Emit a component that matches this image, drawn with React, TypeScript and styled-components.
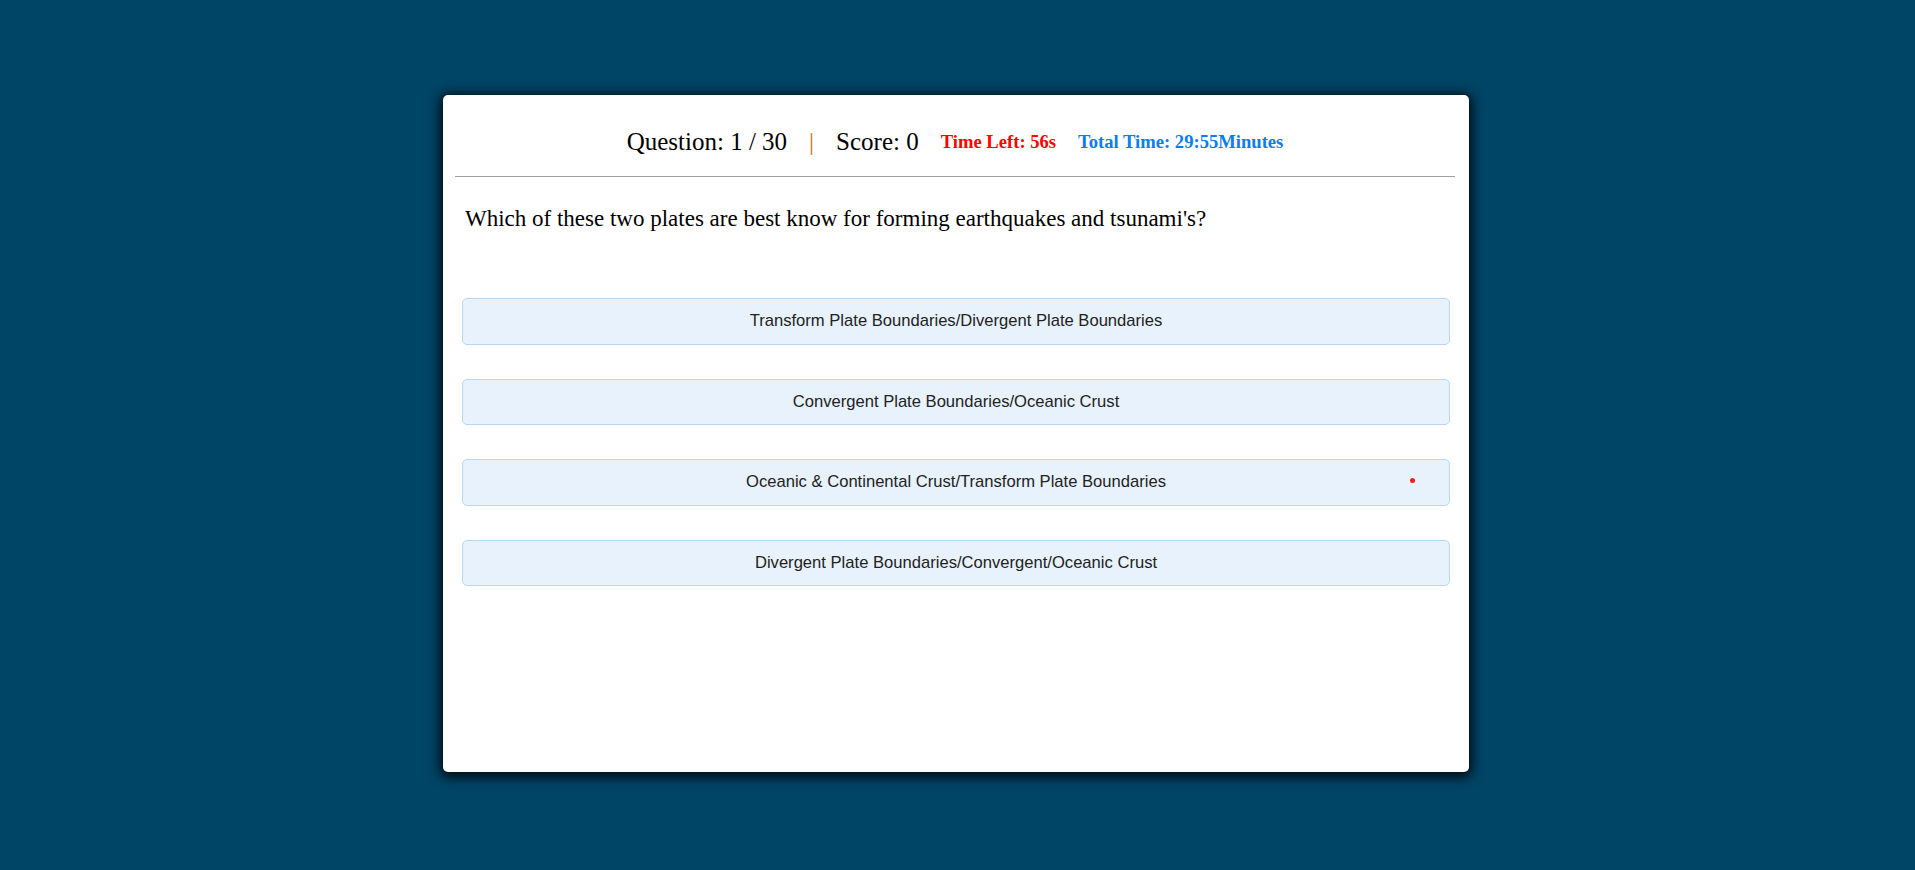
import React from "react";
import styled, { createGlobalStyle } from "styled-components";

const GlobalStyle = createGlobalStyle`
  html, body {
    margin: 0;
    padding: 0;
    background: #004466;
  }
  body {
    font-family: "Liberation Serif", "Times New Roman", serif;
  }
`;

const Page = styled.div`
  min-height: 870px;
  box-sizing: border-box;
  padding: 95px 3px 0 0;
  display: flex;
  justify-content: center;
  align-items: flex-start;
`;

const Card = styled.div`
  width: 1026px;
  height: 677px;
  box-sizing: border-box;
  background: #ffffff;
  border-radius: 5px;
  box-shadow: 0 2px 12px 3px rgba(0, 0, 0, 0.85);
  padding: 0 12px 12px 12px;
  display: flex;
  flex-direction: column;
`;

const Header = styled.div`
  display: flex;
  justify-content: center;
  align-items: center;
  padding: 33px 0 20px 0;
  border-bottom: 1px solid #a0a0a0;
  margin: 0 2px 0 0;
`;

const Stat = styled.span`
  font-size: 25px;
  color: #000;
`;

const Pipe = styled.span`
  font-size: 25px;
  color: #c8741c;
  margin: 0 22px;
`;

const Timer = styled.span<{ $color: string; $gap: number }>`
  font-size: 18.6px;
  font-weight: bold;
  color: ${(p) => p.$color};
  margin-left: ${(p) => p.$gap}px;
`;

const Question = styled.p`
  margin: 29px 0 0 0;
  padding-left: 10px;
  font-size: 23px;
  color: #000;
`;

const Answers = styled.div`
  display: flex;
  flex-direction: column;
  gap: 34px;
  margin: 66px 7px 0 7px;
`;

const Answer = styled.button`
  position: relative;
  height: 46.5px;
  box-sizing: border-box;
  width: 100%;
  background: #e8f2fc;
  border: 1px solid #b8d8f2;
  border-radius: 5px;
  font-family: "Liberation Sans", Arial, sans-serif;
  font-size: 16.6px;
  color: #222;
  text-align: center;
  cursor: pointer;
  padding: 0;
`;

const Dot = styled.span`
  position: absolute;
  right: 34px;
  top: 18px;
  width: 5px;
  height: 5px;
  border-radius: 50%;
  background: #ff1a1a;
`;

const answers = [
  { text: "Transform Plate Boundaries/Divergent Plate Boundaries", dot: false },
  { text: "Convergent Plate Boundaries/Oceanic Crust", dot: false },
  { text: "Oceanic & Continental Crust/Transform Plate Boundaries", dot: true },
  { text: "Divergent Plate Boundaries/Convergent/Oceanic Crust", dot: false },
];

export default function App() {
  return (
    <>
      <GlobalStyle />
      <Page>
        <Card>
          <Header>
            <Stat>Question: 1 / 30</Stat>
            <Pipe>|</Pipe>
            <Stat>Score: 0</Stat>
            <Timer $color="#ff0000" $gap={22}>Time Left: 56s</Timer>
            <Timer $color="#0a7cf5" $gap={22}>Total Time: 29:55Minutes</Timer>
          </Header>
          <Question>
            Which of these two plates are best know for forming earthquakes and tsunami's?
          </Question>
          <Answers>
            {answers.map((a) => (
              <Answer key={a.text}>
                {a.text}
                {a.dot && <Dot />}
              </Answer>
            ))}
          </Answers>
        </Card>
      </Page>
    </>
  );
}
